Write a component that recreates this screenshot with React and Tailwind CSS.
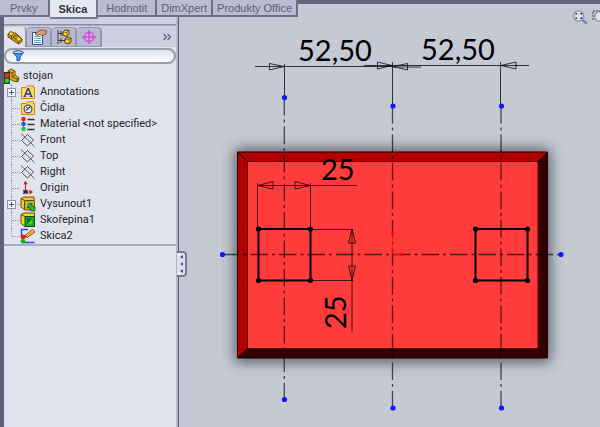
import React, { useState } from "react";

const TABS = [
    { label: "Prvky", pad: "px-2.5" },
    { label: "Skica", pad: "px-[9px]" },
    { label: "Hodnotit", pad: "px-2" },
    { label: "DimXpert", pad: "px-1" },
    { label: "Produkty Office", pad: "px-1" },
];

const PartIcon = () => (
    <svg viewBox="0 0 16 16" className="w-4 h-4" stroke="#4a3500" strokeWidth="0.8" strokeLinejoin="round">
        <path d="M1 5 L4 2.5 L7 4.5 L8 3.5 L15 10 L15 12.5 L11.5 15 L1 8 Z" fill="#d99a08" />
        <path d="M1 5 L4 2.5 L7 4.5 L4.5 7 Z" fill="#ffe14a" />
        <path d="M6 8 L9 5.5 L15 10 L11.5 12.5 Z" fill="#ffd52e" />
        <ellipse cx="9" cy="8.4" rx="1.7" ry="1.1" fill="#fff08a" />
        <path d="M11.5 12.5 L11.5 15 M4.5 7 L4.5 10" fill="none" />
    </svg>
);

const PropertyIcon = () => (
    <svg viewBox="0 0 16 16" className="w-4 h-4">
        <path d="M1.5 3.5 H11.5 V15.5 H1.5 Z" fill="#fff" stroke="#2d4c86" />
        <path d="M3 7.5 H10 M3 9.5 H10 M3 11.5 H10 M3 13.5 H10" stroke="#4fa5d8" />
        <path d="M4 5 L8 1.5 L12 1 L15.5 2 L15 5 L11 6.5 L9 5.5 L6 6.5 Z" fill="#d9a172" stroke="#704022" strokeWidth="0.8" />
    </svg>
);

const ConfigIcon = () => (
    <svg viewBox="0 0 16 16" className="w-4 h-4" stroke="#3d3520" strokeWidth="0.9">
        <path d="M2 1 V15 M2 4.5 H7 M2 11.5 H9 M5 2 V7 M5 9 V14" fill="none" />
        <path d="M7 3 L9 1 L13 1.5 L13 5.5 L11 7.5 L7 6.5 Z" fill="#ffd52e" />
        <path d="M9 10 L11 8.5 L15 9 L15 13 L13 15 L9 14 Z" fill="#ffd52e" />
        <path d="M7 3 L11 3.5 L11 7.5 M11 3.5 L13 1.5 M9 10 L13 10.5 L13 15 M13 10.5 L15 9" fill="none" strokeWidth="0.6" />
    </svg>
);

const TargetIcon = () => (
    <svg viewBox="0 0 16 16" className="w-4 h-4" fill="none" stroke="#d048d8" strokeWidth="1.4">
        <circle cx="8" cy="8" r="4.6" />
        <path d="M8 1 V15 M1 8 H15" />
    </svg>
);

const FunnelIcon = () => (
    <svg viewBox="0 0 12 12" className="w-3 h-3">
        <path d="M1 2.5 L5 7 V11 L8 10 V7 L11.5 2.5 Z" fill="#4aa0f0" stroke="#1c4aa8" />
        <ellipse cx="6.2" cy="2.3" rx="5.2" ry="1.5" fill="#b5dcff" stroke="#1c4aa8" />
    </svg>
);

const RootIcon = () => (
    <svg viewBox="0 0 16 16" className="w-4 h-4" strokeWidth="0.8">
        <path d="M4 3 L7 1 L11 3 L11 7 L15 10 L14 14 L9 13 L4 10 Z" fill="#e8ac12" stroke="#4a3500" />
        <path d="M4 3 L8 5 L11 3 M8 5 V9 L11 7 M8 9 L13 11 L15 10 M13 11 V14" fill="none" stroke="#4a3500" />
        <rect x="0.5" y="4.5" width="5" height="11" fill="#403b34" stroke="#222" />
        <circle cx="3" cy="7.4" r="2.2" fill="#ff2a1a" />
        <circle cx="3" cy="12.8" r="2.2" fill="#22dd2a" />
    </svg>
);

const FolderBase = () => (
    <path d="M1.5 3.5 H6 L7.5 1.8 H13.5 V3.5 H14.5 V14.5 H1.5 Z" fill="#ffd95e" stroke="#c98d10" />
);

const AnnotationIcon = () => (
    <svg viewBox="0 0 16 16" className="w-4 h-4">
        <FolderBase />
        <path d="M4.5 12.5 L7.8 4.8 H8.6 L11.5 12.5 M5.8 10 H10.2" fill="none" stroke="#1d3da8" strokeWidth="1.4" />
        <path d="M3.4 12.5 H5.8 M9.8 12.5 H12.6" stroke="#1d3da8" />
    </svg>
);

const SensorIcon = () => (
    <svg viewBox="0 0 16 16" className="w-4 h-4">
        <FolderBase />
        <circle cx="8" cy="9" r="3.9" fill="#edf3ff" stroke="#444b70" strokeWidth="1.2" />
        <path d="M6 10.5 L10.5 6.5 M6.5 7 L7 7.8" stroke="#333" strokeWidth="1.2" />
    </svg>
);

const MaterialIcon = () => (
    <svg viewBox="0 0 16 16" className="w-4 h-4">
        <path d="M3.5 1 V15" stroke="#555" strokeWidth="0.7" />
        <circle cx="3.5" cy="3" r="2.3" fill="#e81d32" />
        <circle cx="3.5" cy="8" r="2.3" fill="#2b55dc" />
        <circle cx="3.5" cy="13" r="2.3" fill="#1ec838" />
        <path d="M7.5 3.5 H14.5 M7.5 8.5 H14.5 M7.5 13.5 H14.5" stroke="#333" strokeWidth="1.4" />
    </svg>
);

const PlaneIcon = () => (
    <svg viewBox="0 0 16 16" className="w-4 h-4" fill="none" stroke="#4b4d55">
        <path d="M1.5 8.5 L7.5 2.5 L13.5 8 L7.5 14 Z" />
        <path d="M1 1.5 L14.5 14.5" strokeWidth="0.9" />
    </svg>
);

const OriginIcon = () => (
    <svg viewBox="0 0 16 16" className="w-4 h-4">
        <path d="M5.5 11.5 V3" stroke="#cc2030" strokeWidth="1.2" />
        <path d="M3.4 4.2 L5.5 0.8 L7.6 4.2 Z M9.5 9.5 L13 12 L9.5 14.5 Z" fill="#cc1020" />
        <path d="M5.5 12 H10" stroke="#777" />
        <path d="M3.5 10 L7.5 14 M7.5 10 L3.5 14 M3 12 H8" stroke="#222" strokeWidth="1.1" />
    </svg>
);

const ExtrudeIcon = () => (
    <svg viewBox="0 0 16 16" className="w-4 h-4" strokeLinejoin="round">
        <path d="M1 2.5 L4 1 H14 L14.5 11 L12 14 H5 L1 11 Z" fill="#f7ca1c" stroke="#5f4c08" />
        <path d="M1 2.5 L4.5 4.5 H14 M4.5 4.5 V14" fill="none" stroke="#5f4c08" />
        <rect x="6" y="6" width="6" height="6" fill="#fff3ae" stroke="#77600e" strokeWidth="0.8" />
        <path d="M8 7.5 H12 L11 9 L15 11 V15 H11 L9 11 L7.5 12 Z" fill="#27b735" stroke="#075b12" strokeWidth="0.8" />
    </svg>
);

const ShellIcon = () => (
    <svg viewBox="0 0 16 16" className="w-4 h-4" strokeLinejoin="round">
        <path d="M1 2.5 L4 1 H14.5 V14.5 H5 L1 11.5 Z" fill="#f7da24" stroke="#5f4c08" />
        <rect x="5" y="4.5" width="9.5" height="10" fill="#19a82a" stroke="#064d0e" />
        <path d="M7 6.5 H12.5 V12.5 H7 Z" fill="#0d6f1a" />
        <path d="M7 12.5 L12.5 6.5 V12.5 Z" fill="#38d747" />
        <path d="M1 2.5 L5 4.5" stroke="#5f4c08" />
    </svg>
);

const SketchIcon = () => (
    <svg viewBox="0 0 16 16" className="w-4 h-4">
        <path d="M8 1.5 H1.5 V8 M4 14.5 H14.5" fill="none" stroke="#224fdd" strokeWidth="1.4" />
        <path d="M5 7.5 L12.5 1.5 L15 4 L7 9.5 Z" fill="#ffb52a" stroke="#5f3210" strokeWidth="0.8" />
        <path d="M3.5 9.5 L5 7.5 L7 9.5 Z" fill="#222" />
        <circle cx="3" cy="9" r="2.4" fill="#ee2016" />
        <circle cx="3" cy="13.3" r="2.4" fill="#15ae24" />
    </svg>
);

const TREE = [
    { label: "Annotations", Icon: AnnotationIcon, expandable: true },
    { label: "Čidla", Icon: SensorIcon },
    { label: "Material <not specified>", Icon: MaterialIcon },
    { label: "Front", Icon: PlaneIcon },
    { label: "Top", Icon: PlaneIcon },
    { label: "Right", Icon: PlaneIcon },
    { label: "Origin", Icon: OriginIcon },
    { label: "Vysunout1", Icon: ExtrudeIcon, expandable: true },
    { label: "Skořepina1", Icon: ShellIcon },
    { label: "Skica2", Icon: SketchIcon },
];

const MANAGERS = [
    { label: "FeatureManager", Icon: PartIcon },
    { label: "PropertyManager", Icon: PropertyIcon },
    { label: "ConfigurationManager", Icon: ConfigIcon },
    { label: "DimXpertManager", Icon: TargetIcon },
];

const CommandTabs = () => {
    const [active, setActive] = useState("Skica");

    return (
        <nav className="flex items-start h-[17px] shrink-0 bg-[#c5c9d4] border-t-4 border-[#62657f]">
            <div className="relative z-10 flex items-start -mt-1">
                {TABS.map(({ label, pad }) => (
                    <button
                        key={label}
                        onClick={() => setActive(label)}
                        className={`${pad} text-[11px] leading-4 border-r-2 border-b-2 whitespace-nowrap cursor-pointer ${active === label ? "h-[19px] font-bold text-[#2f303a] bg-[#e5e8f2] border-[#777991]" : "h-[17px] text-[#60616d] bg-[#babcd2] border-[#6d6f88]"}`}
                    >
                        {label}
                    </button>
                ))}
            </div>
        </nav>
    );
};

const TreeRow = ({ label, Icon, expandable, last }) => (
    <li className="flex items-center h-4">
        <span className="relative w-4 h-4 shrink-0">
            <span className={`absolute left-[7px] top-0 border-l border-dotted border-[#9698a5] ${last ? "h-2" : "h-4"}`} />
            <span className="absolute left-2 right-0 top-2 border-t border-dotted border-[#9698a5]" />
            {expandable && (
                <button aria-label={`Expand ${label}`} className="absolute left-[3px] top-1 w-[9px] h-[9px] border border-[#9295a5] bg-[#f5f6fb] cursor-pointer">
                    <svg viewBox="0 0 7 7" className="block w-[7px] h-[7px]"><path d="M1 3.5 H6 M3.5 1 V6" stroke="#4555a0" /></svg>
                </button>
            )}
        </span>
        <Icon />
        <span className="ml-1 whitespace-nowrap">{label}</span>
    </li>
);

const FeaturePanel = () => {
    const [filter, setFilter] = useState("");
    const [manager, setManager] = useState("FeatureManager");

    return (
        <aside className="flex flex-col w-[179px] shrink-0 bg-[#e1e4ed] border-l-4 border-[#5f6079]">
            <div className="flex flex-col flex-1 border-r border-[#55576a]">
                <div className="flex flex-col flex-1 border-r-2 border-[#b4b6ca]">
                    <div className="h-2 bg-[#cfd1e2] border-b border-[#8b8da5]" />
                    {/* Manager tabs */}
                    <div className="flex items-end h-[22px] bg-[#cdd0e1] border-t border-[#a8aac0]">
                        {MANAGERS.map(({ label, Icon }) => (
                            <button
                                key={label}
                                aria-label={label}
                                onClick={() => setManager(label)}
                                className={`flex items-center justify-center h-5 rounded-t border-r-2 border-[#9496ad] cursor-pointer ${manager === label ? "w-[23px] bg-[#e1e4ed]" : "w-[25px] bg-[#b7b9d0] border-t border-b"}`}
                            >
                                <Icon />
                            </button>
                        ))}
                        <button aria-label="More" className="ml-auto mr-1 h-5 cursor-pointer">
                            <svg viewBox="0 0 10 10" className="w-2.5 h-2.5" fill="none" stroke="#5b5d72" strokeWidth="1.2">
                                <path d="M1.5 2 L4.5 5 L1.5 8 M5.5 2 L8.5 5 L5.5 8" />
                            </svg>
                        </button>
                    </div>
                    {/* Filter */}
                    <label className="flex items-center h-4 mt-px pl-1.5 shrink-0 rounded-full border-2 border-[#9a9cab] bg-linear-to-b from-[#dfe2ef] to-white">
                        <FunnelIcon />
                        <input
                            aria-label="Filter"
                            value={filter}
                            onChange={e => setFilter(e.target.value)}
                            className="flex-1 min-w-0 h-3 px-1 text-[11px] bg-transparent outline-none"
                        />
                    </label>
                    {/* Tree */}
                    <div className="pt-1 border-b-2 border-[#aaacc2] font-[Roboto,'Noto_Sans',sans-serif] text-[11px] leading-4 text-[#25262e]">
                        <div className="flex items-center h-4">
                            <RootIcon />
                            <span className="ml-[3px]">stojan</span>
                        </div>
                        <ul>
                            {TREE.map((item, i) => (
                                <TreeRow key={item.label} {...item} last={i === TREE.length - 1} />
                            ))}
                        </ul>
                    </div>
                </div>
            </div>
        </aside>
    );
};

const Dot = ({ x, y, color = "#1414ff" }) => <circle cx={x} cy={y} r="2.6" fill={color} />;

const Square = ({ x }) => (
    <g>
        <rect x={x} y="229" width="52" height="51.5" fill="none" stroke="#000" strokeWidth="2" />
        <Dot x={x} y={229} color="#000" />
        <Dot x={x + 52} y={229} color="#000" />
        <Dot x={x} y={280.5} color="#000" />
        <Dot x={x + 52} y={280.5} color="#000" />
    </g>
);

const Drawing = () => (
    <svg viewBox="179 17 421 410" preserveAspectRatio="xMidYMid meet" className="block w-full h-full" role="img">
        <defs>
            <filter id="soft" x="-20%" y="-20%" width="140%" height="140%">
                <feGaussianBlur stdDeviation="7" />
            </filter>
        </defs>
        <rect x="235" y="149" width="315" height="213" fill="#3c3e44" opacity="0.8" filter="url(#soft)" />

        {/* Plate with bevelled rim */}
        <rect x="237" y="152" width="311" height="206" fill="#b00000" />
        <path d="M548 152 V358 H237 L247.5 348.5 H538 V161.5 Z" fill="#320000" />
        <rect x="247.5" y="161.5" width="290.5" height="187" fill="#ff3b3b" stroke="#5a0000" />
        <path d="M237.5 152 H547.5 V358 H237.5 Z M237.5 152 L247.5 161.5 M548 152 L538 161.5 M548 358 L538 348.5 M237 358 L247.5 348.5" fill="none" stroke="#1c0000" />

        {/* Centre lines */}
        <g stroke="#000" strokeOpacity="0.65" strokeWidth="1.3" strokeDasharray="17.5 4 3 4">
            <path d="M284.3 98 V399" />
            <path d="M392.5 106 V408" />
            <path d="M501 106 V408" />
            <path d="M222 254.5 H561" />
        </g>

        {/* Dimensions */}
        <g stroke="#000" strokeOpacity="0.75" fill="none">
            <path d="M284.5 64 V98 M392.5 62 V106 M500.5 62 V106" />
            <path d="M255 66.5 H392 M364 65.5 H529 M393 67 H421" />
            <path d="M284 66.5 L269.5 63.5 V70 Z M392 65.5 L377.5 62 V69 Z M393 66.5 L407.5 63.5 V70 Z M501 65.5 L516 62 V69 Z" />
            <path d="M258 185.5 H357 M257.5 183 V229 M310.5 183 V229 M310 229.5 H353 M310 280.5 H353 M352 229 V332" />
            <path d="M258 185.5 L273 181.5 V189 Z M310 185.5 L295 181.5 V189 Z M352 229 L348.5 243 H355.5 Z M352 280 L348.5 266 H355.5 Z" />
        </g>
        <Square x={258.5} />
        <Square x={475.5} />

        {/* Sketch origin */}
        <path d="M392.5 233 V254.5 H402" fill="none" stroke="#ff1010" strokeOpacity="0.6" />
        <circle cx="392.5" cy="232.5" r="1.7" fill="#ff0808" />
        <circle cx="401.5" cy="254.5" r="1.7" fill="#ff0808" />

        <Dot x={284.5} y={97.5} />
        <Dot x={284.5} y={399.5} />
        <Dot x={393} y={106} />
        <Dot x={393} y={408} />
        <Dot x={501.5} y={106} />
        <Dot x={501.5} y={408} />
        <Dot x={222.5} y={254.5} />
        <Dot x={561} y={254.5} />

        <g className="font-[Lato,sans-serif] text-[29px]" fill="#000">
            <text x="298" y="61">52,50</text>
            <text x="421" y="60">52,50</text>
            <text x="321" y="180">25</text>
            <text transform="translate(346 329) rotate(-90)">25</text>
        </g>
    </svg>
);

const Viewport = () => (
    <main className="relative flex-1 min-w-0 bg-[#c5c9d4]">
        <Drawing />
        <button aria-label="Collapse panel" className="absolute -left-0.5 top-[234px] w-2.5 h-[26px] rounded-r border-2 border-l-0 border-[#77798e] bg-[#e1e4ed] cursor-pointer">
            <svg viewBox="0 0 8 22" className="block w-2 h-[22px]" fill="#4b4c98">
                <path d="M3 4 L6 2 V6 Z M3 11 L6 9 V13 Z M3 18 L6 16 V20 Z" />
            </svg>
        </button>
        {/* View tools */}
        <div className="absolute right-0 -top-2 flex gap-1 overflow-hidden">
            <button aria-label="Zoom to fit" className="cursor-pointer">
                <svg viewBox="0 0 16 16" className="w-4 h-4" fill="none">
                    <circle cx="6.5" cy="7" r="5.2" fill="#dce0e8" stroke="#8c9099" strokeWidth="1.3" />
                    <path d="M4 6 V4.5 H5.5 M8 4.5 H9.5 V6 M4 8 V9.5 H5.5 M8 9.5 H9.5 V8" stroke="#555862" strokeWidth="1.2" />
                    <path d="M11 11.5 L14 14" stroke="#5c8fdc" strokeWidth="2.6" strokeLinecap="round" />
                </svg>
            </button>
            <button aria-label="Zoom to area" className="w-2 overflow-hidden cursor-pointer">
                <svg viewBox="0 0 16 16" className="w-4 h-4 max-w-none" fill="none">
                    <circle cx="7.5" cy="7.5" r="4.8" fill="#dce0e8" stroke="#8c9099" strokeWidth="1.3" />
                    <path d="M1 11 V2 H12" stroke="#666a76" strokeDasharray="2 1" strokeWidth="1.4" />
                </svg>
            </button>
        </div>
    </main>
);

export default function App() {
    return (
        <div className="flex flex-col min-h-screen overflow-hidden bg-[#c5c9d4] font-['Liberation_Sans',Arial,sans-serif]">
            <CommandTabs />
            <div className="flex flex-1">
                <FeaturePanel />
                <Viewport />
            </div>
        </div>
    );
}
